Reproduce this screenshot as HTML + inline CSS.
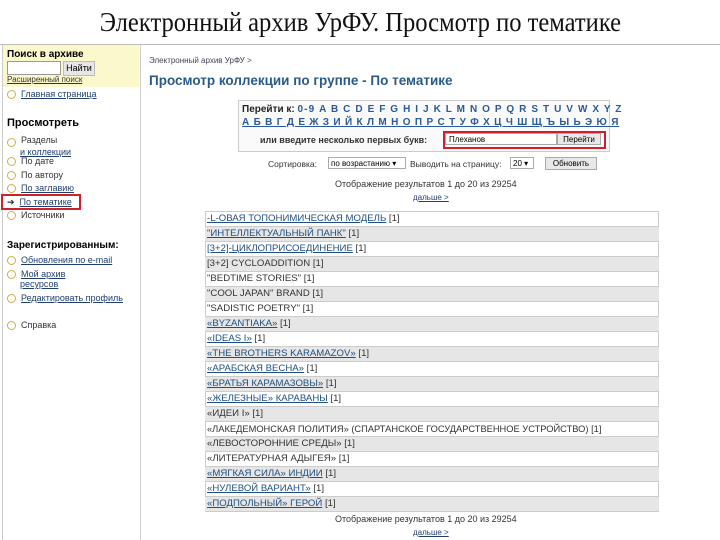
<!DOCTYPE html>
<html><head><meta charset="utf-8"><style>
body{margin:0;width:720px;height:540px;background:#fff;font-family:"Liberation Sans",sans-serif;position:relative;overflow:hidden}
.a{position:absolute;white-space:nowrap}
.t{left:0;width:720px;top:7px;text-align:center;font-family:"Liberation Serif",serif;font-size:27px;color:#111}
.t span{display:inline-block;transform:scaleX(.91)}
a,.l{color:#1f3f6f;text-decoration:underline}
.s{font-size:9px;color:#333}
.row{position:absolute;left:205px;width:452px;height:14px;font-size:9.6px;line-height:14px;padding-left:2px;border-bottom:1px solid #ccc;white-space:nowrap;color:#333}
.row a{color:#1f4f7f}
.ic{display:inline-block;width:7px;height:7px;border:1px solid #c9b24a;border-radius:50%;margin-right:5px;vertical-align:middle}
</style></head><body>
<div class="a t"><span>Электронный архив УрФУ. Просмотр по тематике</span></div>
<div class="a" style="left:0;top:44px;width:720px;height:1px;background:#bbb"></div>
<div class="a" style="left:2px;top:45px;width:1px;height:495px;background:#ccc"></div>
<div class="a" style="left:140px;top:45px;width:1px;height:495px;background:#ccc"></div>
<div class="a" style="left:3px;top:45px;width:136px;height:42px;background:#fbf8cc"></div>
<div class="a" style="left:7px;top:49px;font-size:10px;font-weight:bold">Поиск в архиве</div>
<div class="a" style="left:7px;top:61px;width:52px;height:12px;border:1px solid #999;background:#fff"></div>
<div class="a" style="left:63px;top:61px;width:30px;height:13px;background:#e6e6e6;border:1px solid #bbb;font-size:9px;text-align:center;line-height:13px">Найти</div>
<div class="a s l" style="left:7px;top:75px;font-size:8px">Расширенный поиск</div>
<div class="a s" style="left:7px;top:89px"><span class="ic"></span><span class="l">Главная страница</span></div>
<div class="a" style="left:7px;top:117px;font-size:11px;font-weight:bold">Просмотреть</div>
<div class="a s" style="left:7px;top:134px;line-height:10px"><span class="ic" style="margin-top:4px"></span>Разделы<br><span style="margin-left:13px" class="l">и коллекции</span></div>
<div class="a s" style="left:7px;top:156px"><span class="ic"></span>По дате</div>
<div class="a s" style="left:7px;top:170px"><span class="ic"></span>По автору</div>
<div class="a s" style="left:7px;top:183px"><span class="ic"></span><span class="l">По заглавию</span></div>
<div class="a s" style="left:7px;top:197px"><span style="margin-right:5px;color:#224">➔</span><span class="l">По тематике</span></div>
<div class="a" style="left:1px;top:194px;width:80px;height:16px;border:2px solid #d0202a;box-sizing:border-box"></div>
<div class="a s" style="left:7px;top:210px"><span class="ic"></span>Источники</div>
<div class="a" style="left:7px;top:240px;font-size:10px;font-weight:bold">Зарегистрированным:</div>
<div class="a s" style="left:7px;top:255px"><span class="ic"></span><span class="l">Обновления по e-mail</span></div>
<div class="a s" style="left:7px;top:269px;line-height:10px"><span class="ic"></span><span class="l">Мой архив</span><br><span style="margin-left:13px" class="l">ресурсов</span></div>
<div class="a s" style="left:7px;top:293px"><span class="ic"></span><span class="l">Редактировать профиль</span></div>
<div class="a s" style="left:7px;top:320px"><span class="ic"></span>Справка</div>

<div class="a" style="left:149px;top:56px;font-size:8px;color:#445">Электронный архив УрФУ &gt;</div>
<div class="a" style="left:149px;top:73px;font-size:13.5px;font-weight:bold;color:#2a5a8a">Просмотр коллекции по группе - По тематике</div>
<div class="a" style="left:238px;top:100px;width:370px;height:50px;border:1px solid #ccc;background:#fafafa"></div>
<div class="a" style="left:242px;top:104px;font-size:10px;font-weight:bold;color:#222">Перейти к: <span style="color:#2a5a9a;letter-spacing:1.1px">0-9 A B C D E F G H I J K L M N O P Q R S T U V W X Y Z</span></div>
<div class="a" style="left:242px;top:117px;font-size:10px;font-weight:bold;color:#2a5a9a;text-decoration:underline;letter-spacing:0.8px">А Б В Г Д Е Ж З И Й К Л М Н О П Р С Т У Ф Х Ц Ч Ш Щ Ъ Ы Ь Э Ю Я</div>
<div class="a" style="left:260px;top:135px;font-size:9px;font-weight:bold;color:#333">или введите несколько первых букв:</div>
<div class="a" style="left:445px;top:133px;width:112px;height:12px;border:1px solid #aaa;background:#fff;font-size:8px;line-height:12px;padding-left:3px;box-sizing:border-box">Плеханов</div>
<div class="a" style="left:557px;top:133px;width:44px;height:12px;background:#e8e8e8;border:1px solid #aaa;font-size:8px;line-height:11px;text-align:center;box-sizing:border-box">Перейти</div>
<div class="a" style="left:443px;top:131px;width:163px;height:18px;border:2px solid #d0202a;box-sizing:border-box"></div>
<div class="a" style="left:268px;top:159px;font-size:8.5px;color:#333">Сортировка:</div>
<div class="a" style="left:328px;top:157px;width:78px;height:12px;border:1px solid #aaa;font-size:8px;line-height:12px;padding-left:2px;box-sizing:border-box">по возрастанию ▾</div>
<div class="a" style="left:410px;top:159px;font-size:8.5px;color:#333">Выводить на страницу:</div>
<div class="a" style="left:510px;top:157px;width:24px;height:12px;border:1px solid #aaa;font-size:8px;line-height:12px;padding-left:2px;box-sizing:border-box">20 ▾</div>
<div class="a" style="left:545px;top:157px;width:52px;height:13px;background:#e8e8e8;border:1px solid #aaa;font-size:8px;line-height:12px;text-align:center;box-sizing:border-box">Обновить</div>
<div class="a" style="left:335px;top:179px;font-size:9px;color:#333">Отображение результатов 1 до 20 из 29254</div>
<div class="a l" style="left:413px;top:193px;font-size:8px">дальше &gt;</div>

<div class="a" style="left:205px;top:211px;width:454px;height:300px;border:1px solid #ccc;box-sizing:border-box"></div>
<div class="row" style="top:212px"><a>-L-ОВАЯ ТОПОНИМИЧЕСКАЯ МОДЕЛЬ</a> [1]</div>
<div class="row" style="top:227px;background:#e6e6e6"><a>"ИНТЕЛЛЕКТУАЛЬНЫЙ ПАНК"</a> [1]</div>
<div class="row" style="top:242px"><a>[3+2]-ЦИКЛОПРИСОЕДИНЕНИЕ</a> [1]</div>
<div class="row" style="top:257px;background:#e6e6e6">[3+2] CYCLOADDITION [1]</div>
<div class="row" style="top:272px">"BEDTIME STORIES" [1]</div>
<div class="row" style="top:287px;background:#e6e6e6">"COOL JAPAN" BRAND [1]</div>
<div class="row" style="top:302px">"SADISTIC POETRY" [1]</div>
<div class="row" style="top:317px;background:#e6e6e6"><a>«BYZANTIAKA»</a> [1]</div>
<div class="row" style="top:332px"><a>«IDEAS I»</a> [1]</div>
<div class="row" style="top:347px;background:#e6e6e6"><a>«THE BROTHERS KARAMAZOV»</a> [1]</div>
<div class="row" style="top:362px"><a>«АРАБСКАЯ ВЕСНА»</a> [1]</div>
<div class="row" style="top:377px;background:#e6e6e6"><a>«БРАТЬЯ КАРАМАЗОВЫ»</a> [1]</div>
<div class="row" style="top:392px"><a>«ЖЕЛЕЗНЫЕ» КАРАВАНЫ</a> [1]</div>
<div class="row" style="top:407px;background:#e6e6e6">«ИДЕИ I» [1]</div>
<div class="row" style="top:422px;font-size:9.3px">«ЛАКЕДЕМОНСКАЯ ПОЛИТИЯ» (СПАРТАНСКОЕ ГОСУДАРСТВЕННОЕ УСТРОЙСТВО) [1]</div>
<div class="row" style="top:437px;background:#e6e6e6">«ЛЕВОСТОРОННИЕ СРЕДЫ» [1]</div>
<div class="row" style="top:452px">«ЛИТЕРАТУРНАЯ АДЫГЕЯ» [1]</div>
<div class="row" style="top:467px;background:#e6e6e6"><a>«МЯГКАЯ СИЛА» ИНДИИ</a> [1]</div>
<div class="row" style="top:482px"><a>«НУЛЕВОЙ ВАРИАНТ»</a> [1]</div>
<div class="row" style="top:497px;background:#e6e6e6"><a>«ПОДПОЛЬНЫЙ» ГЕРОЙ</a> [1]</div>
<div class="a" style="left:335px;top:514px;font-size:9px;color:#333">Отображение результатов 1 до 20 из 29254</div>
<div class="a l" style="left:413px;top:528px;font-size:8px">дальше &gt;</div>
</body></html>
